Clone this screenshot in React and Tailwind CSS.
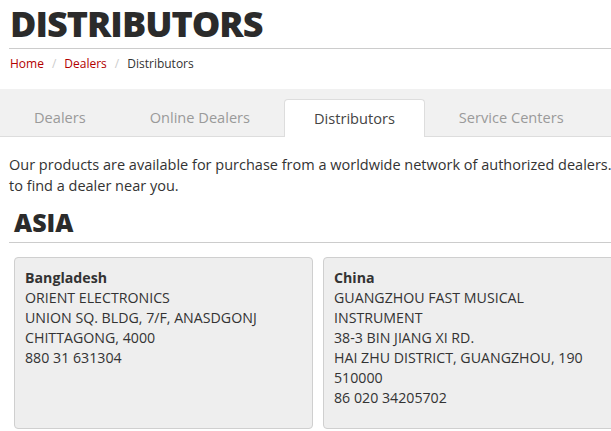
import React from "react";

const tabs = ["Dealers", "Online Dealers", "Distributors", "Service Centers"];

function Card({ title, lines }) {
  return (
    <div className="rounded-[4px] border border-[#cfcfcf] bg-[#eeeeee] p-[10px]">
      <p className="mb-[10px] text-[14.2px] leading-[20px] text-[#333]">
        <strong className="font-bold">{title}</strong>
        {lines.map((l, i) => (
          <React.Fragment key={i}>
            <br />
            {l}
          </React.Fragment>
        ))}
      </p>
    </div>
  );
}

export default function App() {
  return (
    <div className="w-screen h-[431px] overflow-hidden bg-white" style={{ fontFamily: '"Open Sans", sans-serif' }}>
      <div className="w-[960px]">
        <div className="pl-[9px]">
          <h1 className="mt-[6px] pl-[1px] text-[36px] leading-[36px] font-extrabold tracking-[-1px] text-[#2b2b2b] pb-[6px] border-b border-[#cccccc]">
            DISTRIBUTORS
          </h1>
          <nav className="mt-[5px] pl-[1px] text-[12px] leading-[20px] flex items-center">
            <span className="text-[#b30000]">Home</span>
            <span className="px-[8px] text-[#cccccc]">/</span>
            <span className="text-[#b30000]">Dealers</span>
            <span className="px-[8px] text-[#cccccc]">/</span>
            <span className="text-[#333]">Distributors</span>
          </nav>
        </div>
        <div className="mt-[15px] h-[48px] bg-[#f1f1f1] border-b border-[#dddddd] flex items-end pl-[4px] gap-[4px]">
          {tabs.map((t) =>
            t === "Distributors" ? (
              <div
                key={t}
                className="-mb-px h-[38px] px-[29px] flex items-center bg-white border border-b-0 border-[#dddddd] rounded-t-[4px] text-[14.6px] text-[#444]"
              >
                {t}
              </div>
            ) : (
              <div key={t} className="h-[37px] px-[30px] flex items-center text-[14.6px] text-[#9a9a9a]">
                {t}
              </div>
            )
          )}
        </div>
        <div className="pl-[9px]">
          <p className="mt-[17px] text-[14.5px] leading-[21px] text-[#333]">
            Our products are available for purchase from a worldwide network of authorized dealers. Please use the list below
            <br />
            to find a dealer near you.
          </p>
          <h2 className="mt-[14px] pl-[5px] text-[25px] leading-[25px] font-extrabold text-[#2b2b2b] pb-[7px] border-b border-[#cccccc]">
            ASIA
          </h2>
          <div className="mt-[14px] pl-[5px] grid grid-cols-[299px_299px_299px] gap-[10px]">
            <Card
              title="Bangladesh"
              lines={["ORIENT ELECTRONICS", "UNION SQ. BLDG, 7/F, ANASDGONJ", "CHITTAGONG, 4000", "880 31 631304"]}
            />
            <Card
              title="China"
              lines={[
                "GUANGZHOU FAST MUSICAL INSTRUMENT",
                "38-3 BIN JIANG XI RD.",
                "HAI ZHU DISTRICT, GUANGZHOU, 190 510000",
                "86 020 34205702",
              ]}
            />
          </div>
        </div>
      </div>
    </div>
  );
}
